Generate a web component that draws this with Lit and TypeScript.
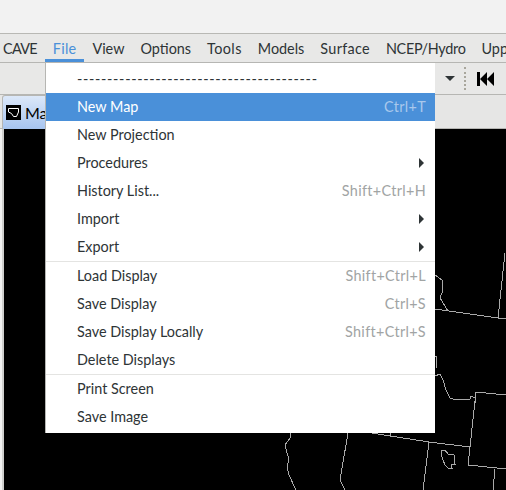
import { LitElement, html, css, svg } from "lit";
import { customElement } from "lit/decorators.js";

// tracking nudges each label to its measured width in the menu bar
const menus = [
  { label: "CAVE", track: -0.7 },
  { label: "File", track: 0.25 },
  { label: "View", track: 0 },
  { label: "Options", track: 0 },
  { label: "Tools", track: 0.4 },
  { label: "Models", track: 0 },
  { label: "Surface", track: 0.3 },
  { label: "NCEP/Hydro", track: -0.3 },
  { label: "Upper Air", track: 0 },
];

type Row = { label: string; key?: string; sub?: boolean; active?: boolean; tearoff?: boolean };

const groups: Row[][] = [
  [
    { label: "----------------------------------------", tearoff: true },
    { label: "New Map", key: "Ctrl+T", active: true },
    { label: "New Projection" },
    { label: "Procedures", sub: true },
    { label: "History List...", key: "Shift+Ctrl+H" },
    { label: "Import", sub: true },
    { label: "Export", sub: true },
  ],
  [
    { label: "Load Display", key: "Shift+Ctrl+L" },
    { label: "Save Display", key: "Ctrl+S" },
    { label: "Save Display Locally", key: "Shift+Ctrl+S" },
    { label: "Delete Displays" },
  ],
  [{ label: "Print Screen" }, { label: "Save Image" }],
];

// state outlines, in page pixels minus the map origin (4,129)
const borders = [
  "M431 146 438 151 439 161 436 169 444 182",
  "M431 180 494 189 501 124",
  "M494 189 502 189",
  "M431 227 433 227 432 239",
  "M431 247 436 245 439 251 442 261 446 269 452 271 466 270 467 267 471 269 471 274",
  "M502 266 472 263 466 318 464 336 502 340",
  "M491 340 489 361",
  "M368 304 386 307 425 313 466 318",
  "M386 304 386 307",
  "M425 313 419 361",
  "M438 321 437 324 439 331 441 336 444 339 448 339 447 335 451 335 450 326 447 325 444 325 441 321Z",
  "M344 304 336 351 341 361",
  "M286 304 286 309 281 316 285 331 283 338 285 346 292 361",
];

@customElement("app-root")
export class AppRoot extends LitElement {
  static styles = css`
    :host {
      display: block;
      position: relative;
      width: 506px;
      height: 490px;
      overflow: hidden;
      background: #f2f2f2;
      font-family: Lato, sans-serif;
      font-size: 14.4px;
      color: #2e3436;
    }
    .titlebar {
      height: 33px;
      border-bottom: 1px solid #b8b8b4;
      background: #f2f2f2;
    }
    .menubar {
      display: flex;
      height: 28px;
      margin-left: -5px;
      background: #e8e8e7;
      border-bottom: 1px solid #b6b6b3;
      white-space: nowrap;
    }
    .menubar span {
      padding: 0 8px;
      line-height: 29px;
    }
    .menubar .open {
      color: #4a90d9;
      box-shadow: inset 0 -3px 0 #4a90d9;
    }
    .toolbar {
      display: flex;
      justify-content: flex-end;
      align-items: center;
      height: 31px;
      padding-right: 12px;
      background: #e8e8e7;
      border-bottom: 1px solid #b6b6b3;
    }
    .caret {
      width: 0;
      height: 0;
      border: 5px solid transparent;
      border-bottom: 0;
      border-top-color: #2e3436;
    }
    .grip {
      height: 23px;
      margin: 0 11px 0 9px;
      border-left: 2px dotted #a8a69c;
    }
    .skip {
      display: block;
    }
    .tabs {
      display: flex;
      height: 34px;
      background: #e6e6e5;
      padding-left: 2px;
      border-bottom: 1px solid #b6b6b3;
      box-sizing: border-box;
    }
    .tab {
      display: flex;
      align-items: center;
      gap: 4px;
      width: 70px;
      height: 34px;
      box-sizing: border-box;
      padding-left: 3px;
      border: 1px solid #b6b6b3;
      border-bottom: 0;
      border-radius: 3px 3px 0 0;
      background: linear-gradient(#dce8f9, #a6c4f0);
      color: #000;
      font-size: 16px;
    }
    .tab svg {
      display: block;
      flex: none;
    }
    .content {
      display: flex;
      height: 361px;
      padding-left: 2px;
      background: #f2f2f2;
    }
    .map {
      display: block;
      flex: 1;
      height: 361px;
      background: #000;
      border-left: 2px solid #cfcfcd;
    }
    .menu {
      position: absolute;
      left: 46px;
      top: 63px;
      width: 389px;
      padding: 2px 0;
      box-sizing: border-box;
      background: #fff;
      box-shadow: -1px 0 0 #b6b6b3;
    }
    .sep {
      height: 1px;
      background: #e4e4e2;
    }
    .row {
      display: flex;
      justify-content: space-between;
      align-items: center;
      height: 28px;
      box-sizing: border-box;
      padding: 0 9px 2px 31px;
    }
    .row.active {
      background: #4a90d9;
      color: #fff;
    }
    .row.active .key {
      color: #a9c8ec;
    }
    .key {
      color: #a1a4a4;
      letter-spacing: 0.33px;
    }
    .tearoff {
      letter-spacing: 0.67px;
    }
    .arrow {
      width: 0;
      height: 0;
      margin: 2px 2px 0 0;
      border: 5px solid transparent;
      border-right: 0;
      border-left: 5px solid #2e3436;
    }
  `;

  renderRow(r: Row) {
    return html`<div class="row ${r.active ? "active" : ""}">
      <span class=${r.tearoff ? "tearoff" : ""}>${r.label}</span>
      ${r.key ? html`<span class="key">${r.key}</span>` : ""}
      ${r.sub ? html`<span class="arrow"></span>` : ""}
    </div>`;
  }

  render() {
    return html`
      <div class="titlebar"></div>
      <div class="menubar">
        ${menus.map(
          (m) => html`<span
            class=${m.label === "File" ? "open" : ""}
            style="letter-spacing: ${m.track}px"
            >${m.label}</span
          >`
        )}
      </div>
      <div class="toolbar">
        <div class="caret"></div>
        <div class="grip"></div>
        <svg class="skip" width="17" height="14" viewBox="0 0 17 14">
          <path d="M0 0h3v14H0zM3 7l7-7v14zM10 7l7-7v14z" fill="#000" />
        </svg>
      </div>
      <div class="tabs">
        <div class="tab">
          <svg width="15" height="15" viewBox="0 0 15 15">
            <rect width="15" height="15" fill="#000" />
            <path d="M2.5 3.5 12.5 3.5 12.5 7 10.5 11.5 7.5 11.5 5.5 8.5 2.5 7Z" fill="none" stroke="#fff" />
          </svg>
          <span>Map</span>
        </div>
      </div>
      <div class="content">
        <svg class="map" viewBox="0 0 502 361" shape-rendering="crispEdges">
          ${borders.map((d) => svg`<path d=${d} fill="none" stroke="#a9a9a9" />`)}
        </svg>
      </div>
      <div class="menu">
        ${groups.map(
          (g, i) => html`${i ? html`<div class="sep"></div>` : ""}${g.map((r) => this.renderRow(r))}`
        )}
      </div>
    `;
  }
}
